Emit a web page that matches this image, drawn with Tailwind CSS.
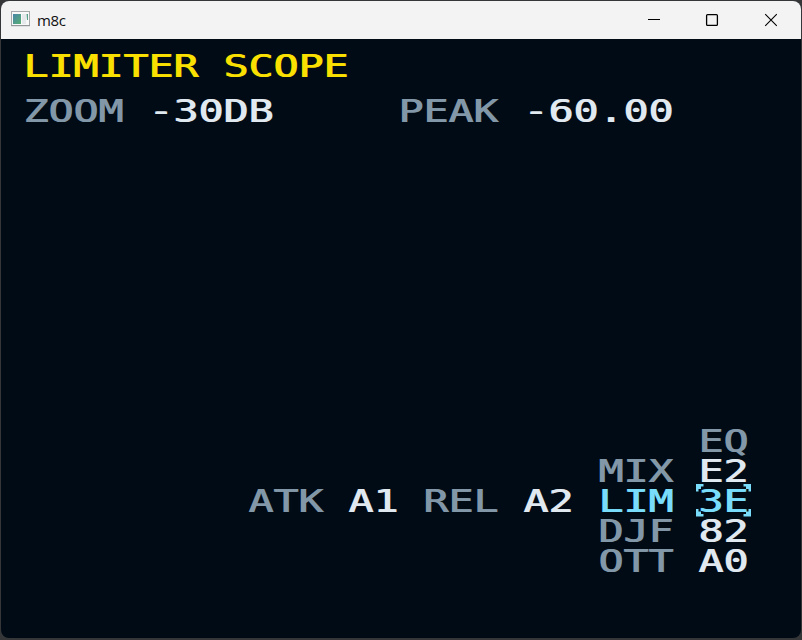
<!DOCTYPE html>
<html lang="en">
<head>
<meta charset="utf-8">
<title>m8c</title>
<script src="https://cdn.jsdelivr.net/npm/@tailwindcss/browser@4"></script>
</head>
<body class="w-[802px] h-[640px] overflow-hidden bg-[#343638]">
<div class="relative w-[802px] h-[640px] pt-px pb-[2px] pl-px pr-px">
  <div class="w-[800px] h-[637px] rounded-[8px] overflow-hidden bg-[#000b15] flex flex-col">
    <header class="h-[38px] shrink-0 bg-[#f3f3f3] flex items-center">
      <svg class="ml-[10px] -mt-[2px] w-[19px] h-[16px] shrink-0" viewBox="0 0 19 16">
        <defs><linearGradient id="g" x1="0" y1="0" x2="1" y2="1"><stop offset="0" stop-color="#4886a8"/><stop offset="1" stop-color="#57ae72"/></linearGradient></defs>
        <rect x=".5" y=".5" width="18" height="14" fill="#f8f8f8" stroke="#a5a9ac"/>
        <path d="M0 14.7H19" stroke="#8d9295"/>
        <rect x="2" y="3" width="8" height="10" fill="url(#g)"/>
        <rect x="11" y="3" width="4" height="10" fill="#e6e9ec"/>
        <path d="M15.5 3h1.5v6h-1z" fill="#57a08c"/>
      </svg>
      <span class="ml-[7px] -mt-[1px] text-[15px] leading-[20px] tracking-[-0.35px] text-[#111] font-['Open_Sans',sans-serif]">m8c</span>
      <div class="ml-auto flex h-full">
        <svg class="w-[58px] h-[38px]" viewBox="0 0 58 38"><path d="M22 18.5H34" stroke="#000" fill="none"/></svg>
        <svg class="w-[58px] h-[38px]" viewBox="0 0 58 38"><rect x="22.6" y="13.6" width="10.8" height="10.8" rx="1" stroke="#000" stroke-width="1.3" fill="none"/></svg>
        <svg class="w-[59px] h-[38px]" viewBox="0 0 59 38"><path d="M23.2 13.2L34.8 24.8M34.8 13.2L23.2 24.8" stroke="#000" stroke-width="1.1" fill="none"/></svg>
      </div>
    </header>
    <main class="pl-[22px] pt-[12px] font-['DejaVu_Sans_Mono',monospace] text-[31.5px] leading-[30px] text-[#8298a8] [text-shadow:0.9px_0_0_currentColor]">
      <div class="w-[570px] origin-left scale-x-[1.3183]">
        <h1 class="h-[30px] text-[#fae000] whitespace-nowrap">LIMITER SCOPE</h1>
        <div class="h-[30px] mt-[15px] flex gap-[1ch]"><span>ZOOM</span><span class="text-[#e0e8f0]">-30DB</span><span class="ml-[4ch]">PEAK</span><span class="text-[#e0e8f0]">-60.00</span></div>
        <div class="mt-[300px] w-[29ch]">
          <div class="h-[30px] flex justify-end">EQ</div>
          <div class="h-[30px] flex justify-end gap-[1ch]"><span>MIX</span><span class="text-[#e0e8f0]">E2</span></div>
          <div class="h-[30px] flex justify-end gap-[1ch]"><span>ATK</span><span class="text-[#e0e8f0]">A1</span><span>REL</span><span class="text-[#e0e8f0]">A2</span><span class="text-[#78dcfa]">LIM</span><span class="text-[#78dcfa]">3E</span></div>
          <div class="h-[30px] flex justify-end gap-[1ch]"><span>DJF</span><span class="text-[#e0e8f0]">82</span></div>
          <div class="h-[30px] flex justify-end gap-[1ch]"><span>OTT</span><span class="text-[#e0e8f0]">A0</span></div>
        </div>
      </div>
    </main>
  </div>
  <svg class="absolute left-[696px] top-[484px] w-[55px] h-[33px]" viewBox="0 0 55 33" fill="#78dcfa">
    <path d="M0 0H7.5V2.5H5V5H2.5V7.5H0Z"/>
    <path d="M55 0H47.5V2.5H50V5H52.5V7.5H55Z"/>
    <path d="M0 32.5H7.5V30H5V27.5H2.5V25H0Z"/>
    <path d="M55 32.5H47.5V30H50V27.5H52.5V25H55Z"/>
  </svg>
</div>
</body>
</html>
